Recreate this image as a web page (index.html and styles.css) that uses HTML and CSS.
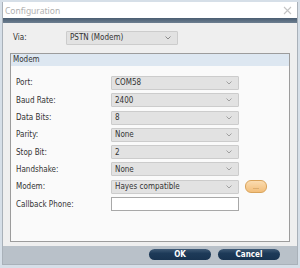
FILE: index.html
```html
<!DOCTYPE html>
<html lang="en">
<head>
    <meta charset="UTF-8">
    <title>Configuration</title>
    <link rel="stylesheet" href="styles.css">
</head>
<body>
    <div class="dialog">
        <div class="titlebar">
            <span class="title">Configuration</span>
            <svg class="close" width="9" height="9" viewBox="0 0 9 9">
                <path d="M1 1 L8 8 M8 1 L1 8" stroke="#c4c4c4" stroke-width="1.1" fill="none"/>
            </svg>
        </div>
        <div class="strip"></div>

        <div class="content">
            <div class="via-row">
                <span class="label">Via:</span>
                <div class="select via-select">
                    <span>PSTN (Modem)</span>
                    <svg class="chev" width="6" height="4" viewBox="0 0 6 4"><path d="M0.5 0.5 L3 3 L5.5 0.5" stroke="#8a8a8a" fill="none"/></svg>
                </div>
            </div>

            <div class="group">
                <div class="group-head">Modem</div>
                <div class="group-body">
                    <span class="label">Port:</span>
                    <div class="select"><span>COM58</span><svg class="chev" width="6" height="4" viewBox="0 0 6 4"><path d="M0.5 0.5 L3 3 L5.5 0.5" stroke="#a0a0a0" fill="none"/></svg></div>
                    <span></span>

                    <span class="label">Baud Rate:</span>
                    <div class="select"><span>2400</span><svg class="chev" width="6" height="4" viewBox="0 0 6 4"><path d="M0.5 0.5 L3 3 L5.5 0.5" stroke="#a0a0a0" fill="none"/></svg></div>
                    <span></span>

                    <span class="label">Data Bits:</span>
                    <div class="select"><span>8</span><svg class="chev" width="6" height="4" viewBox="0 0 6 4"><path d="M0.5 0.5 L3 3 L5.5 0.5" stroke="#a0a0a0" fill="none"/></svg></div>
                    <span></span>

                    <span class="label">Parity:</span>
                    <div class="select"><span>None</span><svg class="chev" width="6" height="4" viewBox="0 0 6 4"><path d="M0.5 0.5 L3 3 L5.5 0.5" stroke="#a0a0a0" fill="none"/></svg></div>
                    <span></span>

                    <span class="label">Stop Bit:</span>
                    <div class="select"><span>2</span><svg class="chev" width="6" height="4" viewBox="0 0 6 4"><path d="M0.5 0.5 L3 3 L5.5 0.5" stroke="#a0a0a0" fill="none"/></svg></div>
                    <span></span>

                    <span class="label">Handshake:</span>
                    <div class="select"><span>None</span><svg class="chev" width="6" height="4" viewBox="0 0 6 4"><path d="M0.5 0.5 L3 3 L5.5 0.5" stroke="#a0a0a0" fill="none"/></svg></div>
                    <span></span>

                    <span class="label">Modem:</span>
                    <div class="select"><span>Hayes compatible</span><svg class="chev" width="6" height="4" viewBox="0 0 6 4"><path d="M0.5 0.5 L3 3 L5.5 0.5" stroke="#a0a0a0" fill="none"/></svg></div>
                    <button class="dots-btn">...</button>

                    <span class="label">Callback Phone:</span>
                    <input class="text-input" type="text">
                    <span></span>
                </div>
            </div>
        </div>

        <div class="footer">
            <button class="footer-btn ok-btn">OK</button>
            <button class="footer-btn">Cancel</button>
        </div>
    </div>
</body>
</html>
```

FILE: styles.css
```css
html, body {
    margin: 0;
    padding: 0;
}
body {
    width: 300px;
    height: 268px;
    background: #d6dfe8;
    padding: 2px 2px 0 2px;
    box-sizing: border-box;
    font-family: 'DejaVu Sans Condensed', 'DejaVu Sans', sans-serif;
    font-size: 8px;
    color: #333;
    overflow: hidden;
}
.dialog {
    width: 296px;
    height: 263px;
    border: 1px solid #a9b1b9;
    border-top: none;
    box-sizing: border-box;
    display: flex;
    flex-direction: column;
    background: #efefef;
}
.titlebar {
    height: 17px;
    background: #fff;
    display: flex;
    align-items: center;
    justify-content: space-between;
    padding: 0 5px 0 2px;
}
.title {
    font-family: 'Noto Sans', sans-serif;
    font-size: 8.5px;
    color: #b0b0b0;
}
.strip {
    height: 5px;
    background: linear-gradient(#4a5d71, #6d7f91);
}
.content {
    flex: 1;
    padding: 8px 7px 4px 7px;
}
.via-row {
    display: flex;
    align-items: center;
    height: 14px;
    padding-left: 3px;
}
.via-row .label {
    width: 53px;
}
.select {
    height: 14px;
    box-sizing: border-box;
    background: #e2e2e2;
    border: 1px solid #cccccc;
    border-radius: 1px;
    display: flex;
    align-items: center;
    justify-content: space-between;
    padding: 0 6px 0 3px;
}
.via-select {
    width: 112px;
}
.group {
    margin-top: 8px;
    border: 1px solid #9c9c9c;
    height: 189px;
    box-sizing: border-box;
    background: #fafafa;
}
.group-head {
    height: 12px;
    line-height: 12px;
    background: #dde7f1;
    padding-left: 2px;
}
.group-body {
    display: grid;
    grid-template-columns: 95px 128px 28px;
    grid-auto-rows: 14px;
    row-gap: 3.3px;
    align-items: center;
    padding: 10px 0 0 5px;
}
.text-input {
    height: 14px;
    box-sizing: border-box;
    border: 1px solid #a8a8a8;
    background: #fff;
    margin: 0;
    padding: 0;
}
.dots-btn {
    justify-self: end;
    width: 22px;
    height: 13px;
    padding: 0;
    border: 1px solid #d9a45c;
    border-radius: 6px;
    background: linear-gradient(#fbdcb0, #f2be7a);
    color: #a06a2a;
    font-size: 7px;
    line-height: 8px;
}
.footer {
    height: 19px;
    background: #b9c1c9;
    display: flex;
    justify-content: flex-end;
    align-items: center;
    gap: 7px;
    padding-right: 17px;
}
.footer-btn {
    width: 62px;
    height: 11px;
    padding: 0;
    border: none;
    border-radius: 6px;
    background: linear-gradient(#3f5a76, #1d3a58 40%, #183350);
    color: #fff;
    font-family: 'DejaVu Sans Condensed', 'DejaVu Sans', sans-serif;
    font-size: 8px;
    font-weight: bold;
    line-height: 11px;
}
```
